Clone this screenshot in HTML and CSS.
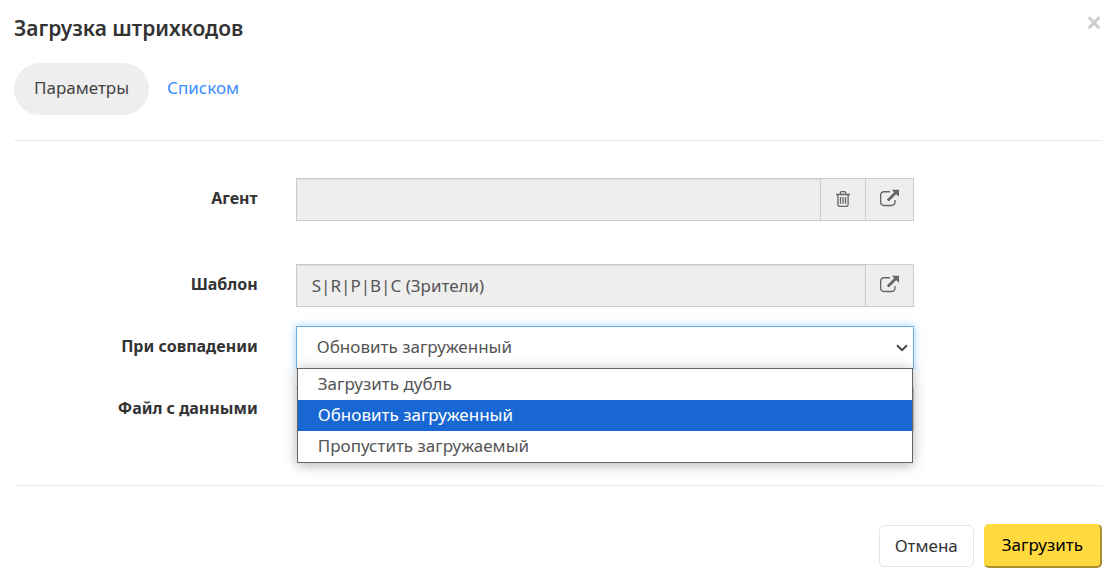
FILE: index.html
```html
<!DOCTYPE html>
<html lang="ru">
<head>
    <meta charset="UTF-8">
    <meta name="viewport" content="width=device-width, initial-scale=1.0">
    <title>Загрузка штрихкодов</title>
    <link rel="stylesheet" href="styles.css">
</head>
<body>
    <svg class="sprite" aria-hidden="true">
        <symbol id="icon-open" viewBox="0 0 18 18">
            <path d="M9.5 2.6H3.6a3 3 0 0 0-3 3v7a3 3 0 0 0 3 3h7.6a3 3 0 0 0 3-3V10.5" fill="none" stroke="currentColor" stroke-width="1.3"/>
            <path d="M7.4 10.9L14.8 3.6" fill="none" stroke="currentColor" stroke-width="2.6"/>
            <path d="M11.2 0.6h6.8v6.8l-2.6-2.5-2-1.9z" fill="currentColor"/>
        </symbol>
        <symbol id="icon-trash" viewBox="0 0 14 16">
            <path d="M0 3.5h14M4.4 3.2V1.7q0-1 1-1h3.2q1 0 1 1v1.5M1.9 3.5v9.8q0 2 1.6 2h7q1.6 0 1.6-2V3.5M4.5 6v6.8M7 6v6.8M9.5 6v6.8" fill="none" stroke="currentColor" stroke-width="1.3"/>
        </symbol>
    </svg>
    <form class="modal">
        <!-- header -->
        <div class="header">
            <h1>Загрузка штрихкодов</h1>
            <button type="button" class="close" aria-label="Закрыть">×</button>
        </div>
        <div class="tabs">
            <a href="#params" class="tab active">Параметры</a>
            <a href="#list" class="tab">Списком</a>
        </div>
        <!-- fields -->
        <div class="fields" id="params">
            <div class="row wide">
                <label for="agent">Агент</label>
                <div class="group">
                    <input type="text" id="agent" class="control" readonly>
                    <button type="button" class="addon trash" aria-label="Очистить"><svg><use href="#icon-trash"/></svg></button>
                    <button type="button" class="addon" aria-label="Выбрать агента"><svg><use href="#icon-open"/></svg></button>
                </div>
            </div>
            <div class="row">
                <label for="template">Шаблон</label>
                <div class="group">
                    <input type="text" id="template" class="control" value="S|R|P|B|C (Зрители)" readonly>
                    <button type="button" class="addon" aria-label="Выбрать шаблон"><svg><use href="#icon-open"/></svg></button>
                </div>
            </div>
            <div class="row">
                <label for="match">При совпадении</label>
                <div class="group">
                    <select id="match" class="control">
                        <option>Загрузить дубль</option>
                        <option selected>Обновить загруженный</option>
                        <option>Пропустить загружаемый</option>
                    </select>
                    <svg class="arrow" viewBox="0 0 12 8"><path d="M1 1.2l5 5 5-5" fill="none" stroke="currentColor" stroke-width="2"/></svg>
                    <ul class="menu" role="listbox" aria-label="При совпадении">
                        <li role="option">Загрузить дубль</li>
                        <li role="option" class="selected" aria-selected="true">Обновить загруженный</li>
                        <li role="option">Пропустить загружаемый</li>
                    </ul>
                </div>
            </div>
            <div class="row">
                <label for="file">Файл с данными</label>
                <div class="group">
                    <input type="text" id="file" class="control file" readonly>
                </div>
            </div>
        </div>
        <!-- footer -->
        <div class="footer">
            <button type="button" class="btn">Отмена</button>
            <button type="submit" class="btn primary">Загрузить</button>
        </div>
    </form>
</body>
</html>
```
FILE: styles.css
```css
*{
    box-sizing: border-box;
}
body{
    margin: 0;
    background: #fff;
    color: #333;
    font-family: "Noto Sans", "Open Sans", sans-serif;
    font-size: 17px;
    line-height: 24px;
}
input, select, button{
    font: inherit;
    color: inherit;
}
.sprite{
    display: none;
}
.modal{
    padding: 12px 11px 0 14px;
}
/* header */
.header{
    display: flex;
    justify-content: space-between;
    align-items: flex-start;
}
.header h1{
    margin: 0;
    font-size: 21px;
    font-weight: 600;
    line-height: 32px;
}
.close{
    padding: 0;
    border: 0;
    background: none;
    color: #ccc;
    font-size: 28px;
    font-weight: 600;
    line-height: 20px;
}
.tabs{
    display: flex;
    padding: 19px 0 25px;
    border-bottom: 1px solid #eaeaea;
}
.tab{
    padding: 13px 18px 15px;
    color: #3a8bff;
    text-decoration: none;
}
.tab.active{
    padding: 13px 20px 15px;
    border-radius: 26px;
    background: #eee;
    color: #444;
}
/* fields */
.fields{
    display: flex;
    flex-direction: column;
    gap: 19px;
    padding: 37px 0 54px;
    border-bottom: 1px solid #eaeaea;
}
.row{
    display: grid;
    grid-template-columns: 22.4% 56.8%;
    column-gap: 3.5%;
}
.row.wide{
    margin-bottom: 24px;
}
.row label{
    padding-top: 8px;
    font-size: 16px;
    font-weight: 700;
    text-align: right;
}
.group{
    display: flex;
    position: relative;
}
.control{
    flex: 1;
    min-width: 0;
    height: 43px;
    padding: 0 15px;
    border: 1px solid #ccc;
    border-radius: 0;
    outline: none;
    background: #eee;
    box-shadow: inset 0 1px 1px rgba(0,0,0,0.08);
    color: #555;
}
select.control{
    padding: 0 20px 2px;
    border-color: #66afe9;
    background: #fff;
    box-shadow: 0 0 8px rgba(102,175,233,0.6);
    appearance: none;
}
.control.file{
    border-left: 0;
    background: #fff;
}
.arrow{
    position: absolute;
    top: 18px;
    right: 6px;
    width: 12px;
    height: 8px;
    color: #444;
    pointer-events: none;
}
.addon{
    display: flex;
    justify-content: center;
    width: 49px;
    margin-left: -1px;
    padding: 10px 0 0;
    border: 1px solid #ccc;
    background: #eee;
    color: #666;
}
.addon svg{
    width: 19px;
    height: 19px;
}
.addon.trash{
    width: 46px;
    padding-top: 12px;
}
.addon.trash svg{
    width: 14px;
    height: 16px;
}
.menu{
    position: absolute;
    top: 42px;
    left: 1px;
    right: 1px;
    z-index: 1;
    margin: 0;
    padding: 0;
    border: 1px solid #666;
    background: #fff;
    box-shadow: 0 2px 12px rgba(0,0,0,0.3);
    list-style: none;
    color: #555;
}
.menu li{
    padding: 3px 20px 4px;
}
.menu .selected{
    background: #1967d2;
    color: #fff;
}
/* footer */
.footer{
    display: flex;
    justify-content: flex-end;
    align-items: center;
    gap: 10px;
    padding: 38px 0 14px;
}
.btn{
    padding: 8px 15px;
    border: 1px solid #e5e5e5;
    border-radius: 5px;
    background: #fff;
}
.btn.primary{
    padding: 8px 17px 9px;
    border: 0 solid #ab9030;
    border-width: 1px 2px 2px 1px;
    border-top-color: #ffdb3e;
    border-left-color: #ffdb3e;
    background: #ffd93e;
    color: #000;
}
```
